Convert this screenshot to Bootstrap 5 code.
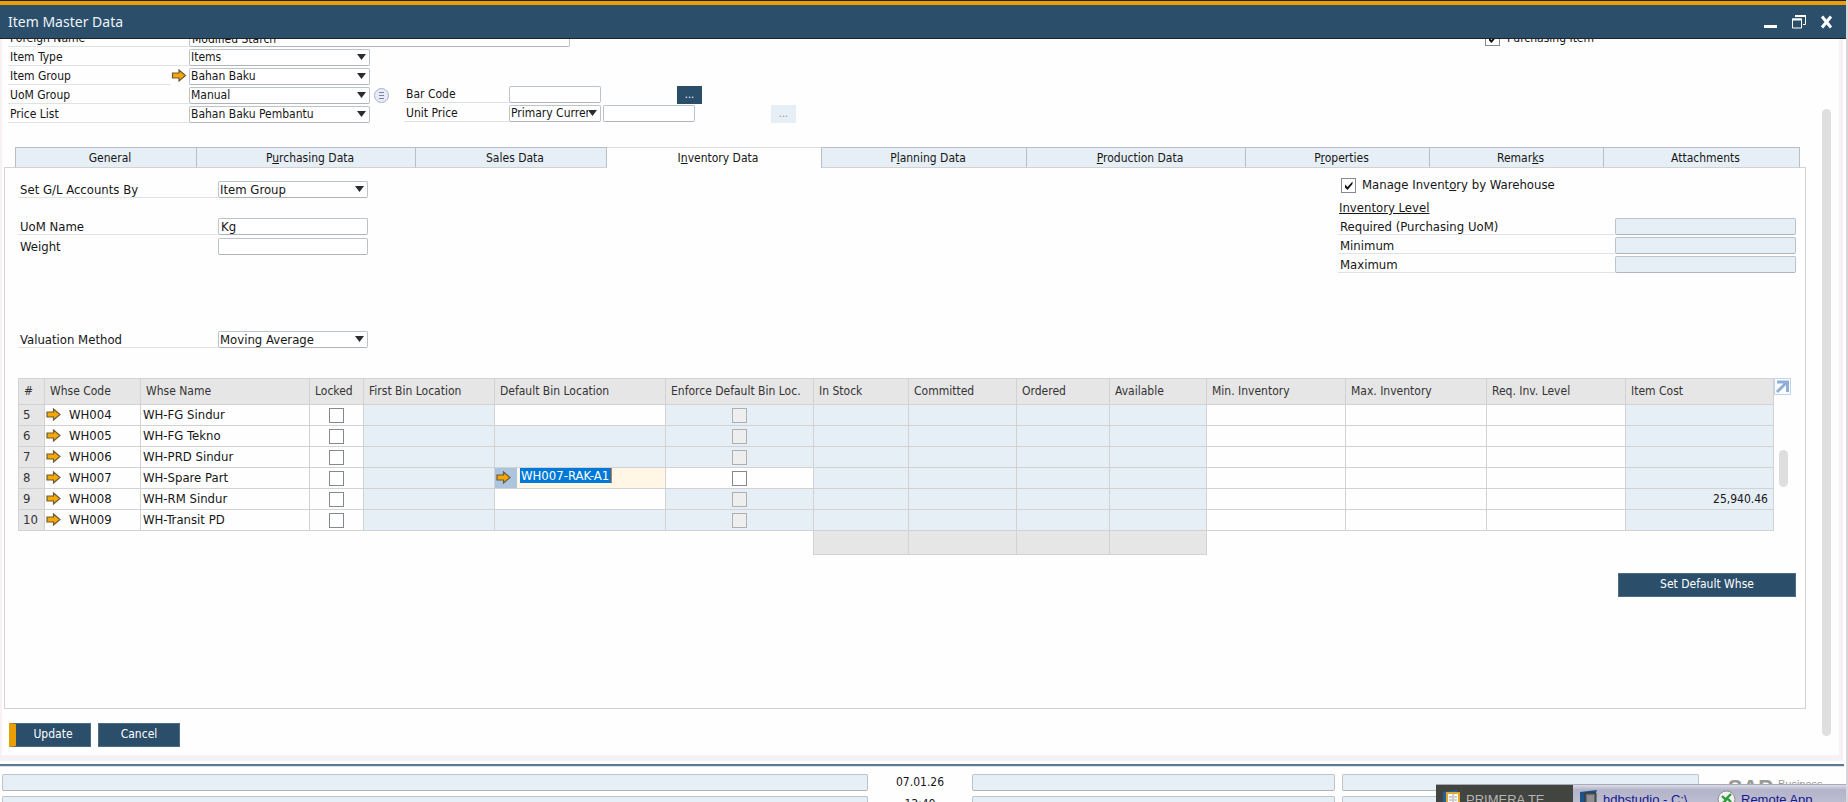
<!DOCTYPE html>
<html lang="en">
<head>
<meta charset="utf-8">
<meta name="viewport" content="width=device-width, initial-scale=1">
<title>Item Master Data</title>
<link href="https://cdn.jsdelivr.net/npm/bootstrap@5.3.0/dist/css/bootstrap.min.css" rel="stylesheet">
<style>
:root{--navy:#2b4e6b;--gold:#e99f00;--pale:#e6eef6;--line:#d2d2d4;--field:#bcc3c9}
body{font-family:"DejaVu Sans Condensed","DejaVu Sans",sans-serif;font-size:12px;line-height:16px;color:#161616;background:#fefefe}
.app{height:100vh;min-height:600px;border-right:2px solid #d8d8dc}
.titlebar{background:var(--navy);border-top:4px solid var(--gold);outline:1px solid #222;height:37px;margin-top:1px;color:#eef3f7;padding:0 11px 0 8px;position:relative;z-index:2}
.titlebar h1{font:14px/20px "Noto Sans",sans-serif}
.winbtns{gap:12px}
.winbtn{border:0;background:none;padding:0;width:16px;height:18px;display:flex}
.frame{border:solid #f6f1f5;border-width:0 4px 6px 2px;margin-right:3px;padding:0 8px 8px 2px;overflow:hidden;position:relative}
.work{margin-right:25px}
.headform{height:117px;padding-left:4px;margin-top:-8px}
.stack{display:flex;flex-direction:column;gap:2px}
.stack.loose{gap:3px}
.headleft{width:396px}
.headmid{padding-top:56px}
.headright{width:321px}
.line{display:flex;height:17px}
.cap{border-bottom:1px solid #dfe3e7;padding-left:2px;line-height:17px;height:17px;white-space:nowrap}
.cap.bare{border-color:transparent}
.w-head{width:181px}.w-link{width:162px}.w-side{width:105px}.w-body{width:200px}
.ctl,.pick{font:inherit;color:#161616;height:17px;padding:0 2px;border:1px solid var(--field);border-bottom-color:#aeb4ba;border-radius:2px;background-color:#fff;line-height:15px;display:block;min-width:0}
.pick{padding:0 12px 0 1px;background:#fff url("data:image/svg+xml,%3Csvg xmlns='http://www.w3.org/2000/svg' width='9' height='6'%3E%3Cpath d='M0 0h9L4.500 6z' fill='%232a2c30'/%3E%3C/svg%3E") no-repeat right 3px top 4px;appearance:none}
.ctl[readonly]{background:var(--pale)}
.long{width:381px}.norm{width:181px}.mid{width:150px}.short{width:92px}
.after-pick{margin-left:2px}
.dots{width:25px;height:18px;border:0;border-radius:0;background:var(--navy);color:#fff;padding:0;font-size:11px;line-height:18px;margin-left:76px}
.dots:disabled{background:var(--pale);color:#8b8fa0;opacity:1}
.tick{appearance:none;width:15px;height:15px;border:1px solid #84898c;background:#fff;margin:0;display:block;flex:none}
.tick:checked{background:url("data:image/svg+xml,%3Csvg xmlns='http://www.w3.org/2000/svg' viewBox='0 0 13 13'%3E%3Cpath d='M3 5.500v3l2.500 2.500 5-6V2.500l-5 5.500z' fill='%23111'/%3E%3C/svg%3E") #fff}
.tick:disabled{background:#eee;border-color:#adb0b2}
.tabs{display:grid;grid-template-columns:181fr 219fr 191fr 215fr 205fr 219fr 184fr 174fr 196fr;margin:0 6px 0 11px;border-left:1px solid #b9bec6}
.tabs button{border:solid #b9bec6;border-width:1px 1px 0 0;background:var(--pale);height:20px;padding:0 0 0 8px;font:inherit;color:inherit}
.tabs button.on{background:#fefefe;border-top-color:#dcdcdc;height:21px;margin-bottom:-1px;position:relative}
.sheet{border:1px solid var(--line);padding:10px 9px 0 13px;font-size:13px}
.upper{height:200px}
.left-form{padding-top:3px}
.gap-a{height:20px}.gap-b{height:76px}
.levels{width:458px;margin-top:-1px}
.levels .cap{flex:1}
.levels h2{font-size:inherit;line-height:16px;margin:7px 0 2px 1px;text-decoration:underline;font-weight:400}
.tick-line{display:flex;align-items:center;gap:7px;height:16px}
.levels .tick-line{padding-left:3px;gap:6px}
.whse{table-layout:fixed;width:100%;border-collapse:collapse}
.whse th,.whse td{border:1px solid var(--line);padding:0 2px;height:21px;line-height:18px;white-space:nowrap;overflow:hidden}
.whse th{height:26px;background:#e6e6e6;font-weight:400;font-size:12px;padding:0 0 2px 5px;color:#333}
.whse .ro{background:var(--pale)}
.whse .cost{text-align:right;font-size:12px;padding-right:5px}
.whse .no{background:#e6e6e6;padding-left:4px;color:#333}
.whse tfoot td{height:24px;border:0}
.whse tfoot .sum{background:#e6e6e6;border:1px solid var(--line)}
.whse .tick{margin:auto}
.whse .edit{padding:0;background:#fff6e6}
.code{display:flex;gap:8px;margin-left:-1px}
.code svg{margin-top:2px}
.edit-in{display:flex;height:20px}
.edit-in span{background:#abc5de;width:22px;padding-left:1px}
.edit-in svg{display:block;margin-top:3px}
.edit-in input{font:inherit;line-height:15px;height:15px;width:92px;margin-left:3px;padding:0 0 0 1px;border:0;border-right:1px solid #e87722;background:#0078d7;color:#fff;border-radius:0}
.rail{width:22px;flex:none}
.rail i{display:block;width:9px;height:37px;border-radius:5px;background:#dedede;margin:55px 0 0 5px}
.cmd{background:var(--navy);color:#fff;border:1px solid #4c6c87;border-radius:0;font-size:12px;line-height:16px;height:24px;padding:0 0 2px;width:82px}
.cmd.main{border-left:7px solid var(--gold)}
.cmd.wide{width:178px}
.under{padding-top:18px}
.cmds{gap:7px;padding:14px 0 0 5px}
.thumb{position:absolute;right:8px;top:71px;bottom:19px;width:9px;border-radius:5px;background:#dfdfdf}
.status{border-top:2px solid #5d7891;margin:3px 2px 0 0;height:38px;padding:8px 16px 0 2px;overflow:hidden;display:grid;grid-template-columns:864fr 90fr 362fr 356fr 122fr;grid-auto-rows:17px;column-gap:7px;row-gap:5px;text-align:center;box-shadow:inset 0 1px #dce2e8}
.status .ctl{width:100%}
.brand{color:#999;text-align:left;padding:3px 0 0 22px;display:flex;gap:5px;font:11px/14px "Liberation Sans",sans-serif}
.brand b{font-size:22px;line-height:22px}
.taskbar{position:absolute;right:0;bottom:0;width:410px;height:18px;overflow:hidden;display:flex;z-index:3;font:13px/20px "Liberation Sans",sans-serif;color:#16168c;background:linear-gradient(#dcdce8 0,#b3b3c9 5px,#bebed2 100%);border-top:1px solid #a9a9b8;white-space:nowrap}
.taskbar a{color:inherit;text-decoration:none;display:flex;gap:5px;padding:5px 0 0 7px;height:30px}
.taskbar a.cur{background:#42443f;color:#b6b6b6}
.taskbar a.slot{width:137px;flex:none}
.taskbar svg{flex:none}
</style>
</head>
<body>
<svg class="d-none" aria-hidden="true"><symbol id="go" viewBox="0 0 15 13"><path d="M1 4h6.500V1L14 6.500 7.500 12V9H1z" fill="#f5a800" stroke="#6b5a3c" stroke-width="1.200"/></symbol></svg>
<div class="app d-flex flex-column position-relative overflow-hidden">
<header class="titlebar d-flex align-items-center justify-content-between flex-shrink-0">
<h1 class="m-0">Item Master Data</h1>
<div class="winbtns d-flex">
<button class="winbtn" aria-label="Minimize"><svg width="16" height="18"><path d="M1 13.500h13" stroke="#fff" stroke-width="3"/></svg></button>
<button class="winbtn" aria-label="Restore"><svg width="16" height="18" fill="none" stroke="#fff"><path d="M1.500 6h9v9h-9z"/><path d="M1 6.500h10M4 3h11" stroke-width="2"/><path d="M14.500 3v8.500H12"/></svg></button>
<button class="winbtn" aria-label="Close"><svg width="16" height="18"><path d="M3 3.500l9 11M12 3.500l-9 11" stroke="#fff" stroke-width="3"/></svg></button>
</div>
</header>

<main class="frame d-flex flex-column flex-grow-1">
<div class="work d-flex flex-column flex-grow-1">
<form class="headform d-flex flex-shrink-0">
<div class="stack headleft">
<div class="line"><label class="cap w-head flex-shrink-0" for="fname">Foreign Name</label><input class="ctl long flex-shrink-0" id="fname" value="Modified Starch"></div>
<div class="line"><label class="cap w-head" for="itype">Item Type</label><select class="pick norm" id="itype"><option>Items</option></select></div>
<div class="line"><label class="cap w-link" for="igroup">Item Group</label><svg width="19" height="15"><use href="#go" x="1" y="1" width="16" height="13"/></svg><select class="pick norm" id="igroup"><option>Bahan Baku</option></select></div>
<div class="line"><label class="cap w-head" for="ugroup">UoM Group</label><select class="pick norm" id="ugroup"><option>Manual</option></select><svg class="ms-1 flex-shrink-0" width="16" height="17"><circle cx="7.500" cy="8.500" r="7" fill="#e9ecf8" stroke="#a9b0cc"/><path d="M5 5.500h5M5 8.500h5M5 11.500h5" stroke="#7c82a0"/></svg></div>
<div class="line"><label class="cap w-head" for="plist">Price List</label><select class="pick norm" id="plist"><option>Bahan Baku Pembantu</option></select></div>
</div>
<div class="stack headmid">
<div class="line"><label class="cap w-side" for="bar">Bar Code</label><input class="ctl short" id="bar"><button type="button" class="dots">...</button></div>
<div class="line"><label class="cap w-side" for="cur">Unit Price</label><select class="pick short" id="cur"><option>Primary Currency</option></select><input class="ctl short after-pick" aria-label="Unit price amount"><button type="button" class="dots" disabled>...</button></div>
</div>
<div class="tick-line headright ms-auto"><input class="tick" type="checkbox" id="pitem" checked><label for="pitem">Purchasing Item</label></div>
</form>

<nav class="tabs flex-shrink-0">
<button>General</button><button>P<u>u</u>rchasing Data</button><button>Sales Data</button><button class="on">I<u>n</u>ventory Data</button><button>P<u>l</u>anning Data</button><button><u>P</u>roduction Data</button><button>P<u>r</u>operties</button><button>Remar<u>k</u>s</button><button>Attachments</button>
</nav>
<section class="sheet flex-grow-1">
<div class="upper d-flex justify-content-between">
<div class="left-form">
<div class="line"><label class="cap w-body" for="gl">Set G/L Accounts By</label><select class="pick mid" id="gl"><option>Item Group</option></select></div>
<div class="gap-a"></div>
<div class="stack loose">
<div class="line"><label class="cap w-body" for="uom">UoM Name</label><input class="ctl mid" id="uom" value="Kg"></div>
<div class="line"><label class="cap bare w-body" for="wt">Weight</label><input class="ctl mid" id="wt"></div>
</div>
<div class="gap-b"></div>
<div class="line"><label class="cap w-body" for="val">Valuation Method</label><select class="pick mid" id="val"><option>Moving Average</option></select></div>
</div>
<div class="levels">
<div class="tick-line"><input class="tick" type="checkbox" id="mng" checked><label for="mng">Manage Invent<u>o</u>ry by Warehouse</label></div>
<h2>Inventory Level</h2>
<div class="stack">
<div class="line"><label class="cap" for="rq">Required (Purchasing UoM)</label><input class="ctl norm" id="rq" readonly></div>
<div class="line"><label class="cap" for="mn">Minimum</label><input class="ctl norm" id="mn" readonly></div>
<div class="line"><label class="cap" for="mx">Maximum</label><input class="ctl norm" id="mx" readonly></div>
</div>
</div>
</div>

<div class="d-flex">
<table class="whse">
<colgroup><col style="width:26px"><col style="width:96px"><col style="width:169px"><col style="width:54px"><col style="width:131px"><col style="width:171px"><col style="width:148px"><col style="width:95px"><col style="width:108px"><col style="width:93px"><col style="width:97px"><col style="width:139px"><col style="width:141px"><col style="width:139px"><col style="width:148px"></colgroup>
<thead><tr><th>#</th><th>Whse Code</th><th>Whse Name</th><th>Locked</th><th>First Bin Location</th><th>Default Bin Location</th><th>Enforce Default Bin Loc.</th><th>In Stock</th><th>Committed</th><th>Ordered</th><th>Available</th><th>Min. Inventory</th><th>Max. Inventory</th><th>Req. Inv. Level</th><th>Item Cost</th></tr></thead>
<tbody>
<tr><td class="no">5</td><td><div class="code"><svg width="15" height="13"><use href="#go"/></svg>WH004</div></td><td>WH-FG Sindur</td><td><input class="tick" type="checkbox" aria-label="Locked"></td><td class="ro"></td><td></td><td class="ro"><input class="tick" type="checkbox" disabled aria-label="Enforce"></td><td class="ro"></td><td class="ro"></td><td class="ro"></td><td class="ro"></td><td></td><td></td><td></td><td class="ro"></td></tr>
<tr><td class="no">6</td><td><div class="code"><svg width="15" height="13"><use href="#go"/></svg>WH005</div></td><td>WH-FG Tekno</td><td><input class="tick" type="checkbox" aria-label="Locked"></td><td class="ro"></td><td class="ro"></td><td class="ro"><input class="tick" type="checkbox" disabled aria-label="Enforce"></td><td class="ro"></td><td class="ro"></td><td class="ro"></td><td class="ro"></td><td></td><td></td><td></td><td class="ro"></td></tr>
<tr><td class="no">7</td><td><div class="code"><svg width="15" height="13"><use href="#go"/></svg>WH006</div></td><td>WH-PRD Sindur</td><td><input class="tick" type="checkbox" aria-label="Locked"></td><td class="ro"></td><td class="ro"></td><td class="ro"><input class="tick" type="checkbox" disabled aria-label="Enforce"></td><td class="ro"></td><td class="ro"></td><td class="ro"></td><td class="ro"></td><td></td><td></td><td></td><td class="ro"></td></tr>
<tr><td class="no">8</td><td><div class="code"><svg width="15" height="13"><use href="#go"/></svg>WH007</div></td><td>WH-Spare Part</td><td><input class="tick" type="checkbox" aria-label="Locked"></td><td class="ro"></td><td class="edit"><div class="edit-in"><span><svg width="15" height="13"><use href="#go"/></svg></span><input value="WH007-RAK-A1" aria-label="Default Bin Location"></div></td><td><input class="tick" type="checkbox" aria-label="Enforce"></td><td class="ro"></td><td class="ro"></td><td class="ro"></td><td class="ro"></td><td></td><td></td><td></td><td class="ro"></td></tr>
<tr><td class="no">9</td><td><div class="code"><svg width="15" height="13"><use href="#go"/></svg>WH008</div></td><td>WH-RM Sindur</td><td><input class="tick" type="checkbox" aria-label="Locked"></td><td class="ro"></td><td></td><td class="ro"><input class="tick" type="checkbox" disabled aria-label="Enforce"></td><td class="ro"></td><td class="ro"></td><td class="ro"></td><td class="ro"></td><td></td><td></td><td></td><td class="ro cost">25,940.46</td></tr>
<tr><td class="no">10</td><td><div class="code"><svg width="15" height="13"><use href="#go"/></svg>WH009</div></td><td>WH-Transit PD</td><td><input class="tick" type="checkbox" aria-label="Locked"></td><td class="ro"></td><td class="ro"></td><td class="ro"><input class="tick" type="checkbox" disabled aria-label="Enforce"></td><td class="ro"></td><td class="ro"></td><td class="ro"></td><td class="ro"></td><td></td><td></td><td></td><td class="ro"></td></tr>
</tbody>
<tfoot><tr><td colspan="7"></td><td class="sum"></td><td class="sum"></td><td class="sum"></td><td class="sum"></td><td colspan="4"></td></tr></tfoot>
</table>
<div class="rail"><svg class="d-block" width="17" height="17" fill="none"><path d="M.5.5h16v16H.5z" fill="#fbfcff" stroke="#c3d3ee"/><path d="M3 4h10.500V14M13 4L3 14" stroke="#8fafd9" stroke-width="3"/></svg><i></i></div>
</div>
<div class="under text-end"><button class="cmd wide">Set Default Whse</button></div>
</section>
<div class="cmds d-flex flex-shrink-0"><button class="cmd main">Update</button><button class="cmd">Cancel</button></div>
</div>
<div class="thumb"></div>
</main>

<footer class="status flex-shrink-0">
<input class="ctl" readonly aria-label="Message"><span>07.01.26</span><input class="ctl" readonly aria-label="Info 1"><input class="ctl" readonly aria-label="Info 2"><div class="brand"><b>SAP</b> Business</div>
<input class="ctl" readonly aria-label="Message 2"><span>13:49</span><input class="ctl" readonly aria-label="Info 3"><input class="ctl" readonly aria-label="Info 4">
</footer>
<nav class="taskbar">
<a class="cur slot" href="#"><svg width="18" height="20"><path d="M0 2l14-2v16H0z" fill="#1f5f9c"/><path d="M4 3h12v15H4z" fill="#fff" stroke="#e0a92c" stroke-width="2"/><path d="M6 7h3M11 7h3M6 10h3M11 10h3M10 4v12" stroke="#999"/></svg>PRIMERA TE...</a>
<a class="slot" href="#"><svg width="18" height="20"><path d="M0 2l17-2-6 16H0z" fill="#1d5288"/><path d="M5 3h11v14H5z" fill="#666" stroke="#333"/><path d="M7 5h7v9H7z" fill="#8c8f94"/></svg>hdbstudio - C:\</a>
<a href="#"><svg width="19" height="20"><circle cx="9.500" cy="9.500" r="8.500" fill="#f2f2f2" stroke="#8a8a8a"/><path d="M5 6l4 4-4 4M14 4l-4 4 4 4" fill="none" stroke="#2e9b3a" stroke-width="2.400"/></svg>Remote App</a>
</nav>
</div>
<script src="https://cdn.jsdelivr.net/npm/bootstrap@5.3.0/dist/js/bootstrap.bundle.min.js"></script>
</body>
</html>
